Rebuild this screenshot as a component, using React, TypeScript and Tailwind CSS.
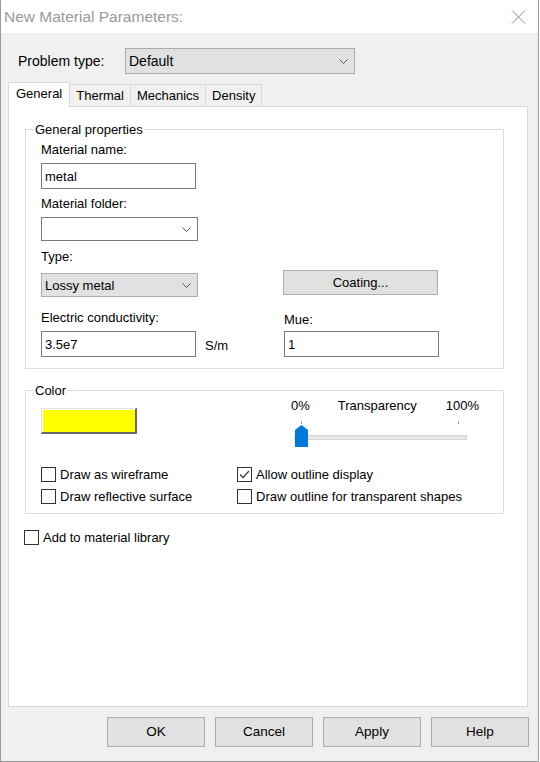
import React from "react";

function Chevron() {
  return (
    <svg width="9" height="5" viewBox="0 0 9 5" className="shrink-0">
      <path d="M0.5 0.5 L4.5 4.5 L8.5 0.5" fill="none" stroke="#555" strokeWidth="1" />
    </svg>
  );
}

function CloseX() {
  return (
    <svg width="15" height="14" viewBox="0 0 15 14">
      <path d="M1 0.5 L14 13.5 M14 0.5 L1 13.5" stroke="#8a8a8a" strokeWidth="1" />
    </svg>
  );
}

function Check({ label, checked }: { label: string; checked?: boolean }) {
  return (
    <label className="flex items-center gap-[4px] leading-[15px]">
      <span className="w-[15px] h-[15px] shrink-0 border border-[#333] bg-white flex items-center justify-center">
        {checked && (
          <svg width="13" height="13" viewBox="0 0 13 13">
            <path d="M2 6.5 L5 9.5 L11 3" fill="none" stroke="#444" strokeWidth="1.3" />
          </svg>
        )}
      </span>
      <span>{label}</span>
    </label>
  );
}

function TextBox({ value, w }: { value: string; w: string }) {
  return (
    <div className={`${w} h-[26px] border border-[#7a7a7a] bg-white flex items-center pl-[3px]`}>
      {value}
    </div>
  );
}

const TABS = ["Thermal", "Mechanics", "Density"];
const BUTTONS = ["OK", "Cancel", "Apply", "Help"];

export default function App() {
  return (
    <div className="w-[540px] h-[762px] bg-white">
      <div className="w-[539px] h-[762px] bg-[#f0f0f0] border-x border-b border-[#9a9a9a] flex flex-col text-[13px] text-black font-['Liberation_Sans',Arial,sans-serif]">
        {/* Title bar */}
        <div className="h-[33px] shrink-0 bg-white flex items-center justify-between pl-[3px] pr-[12px]">
          <span className="text-[15.5px] text-[#9a9a9a]">New Material Parameters:</span>
          <CloseX />
        </div>

        {/* Problem type */}
        <div className="mt-[15px] flex items-center pl-[17px]">
          <span className="w-[107px] text-[14px]">Problem type:</span>
          <div className="w-[230px] h-[26px] bg-[#e1e1e1] border border-[#adadad] flex items-center justify-between pl-[3px] pr-[6px] text-[14px]">
            <span>Default</span>
            <Chevron />
          </div>
        </div>

        {/* Tabs */}
        <div className="mt-[8px] ml-[7px] h-[24px] flex items-end">
          <div className="h-[25px] -mb-px relative z-10 bg-white border border-b-0 border-[#d9d9d9] px-[7px] pb-[2px] flex items-center">
            General
          </div>
          {TABS.map(t => (
            <div key={t} className="h-[22px] bg-[#f0f0f0] border-t border-r border-[#d9d9d9] px-[6px] flex items-center">
              {t}
            </div>
          ))}
        </div>

        {/* Tab panel */}
        <div className="ml-[7px] w-[520px] h-[601px] shrink-0 bg-white border border-[#d9d9d9] flex flex-col">
          <fieldset className="ml-[16px] mt-[15px] w-[479px] border border-[#dcdcdc]">
            <legend className="ml-[8px] px-[1px] leading-[15px]">General properties</legend>
            <div className="pl-[15px] pb-[11px] flex flex-col leading-[15px]">
              <span className="mt-[5px]">Material name:</span>
              <div className="mt-[6px]">
                <TextBox value="metal" w="w-[155px]" />
              </div>
              <span className="mt-[7px]">Material folder:</span>
              <div className="mt-[6px] w-[157px] h-[24px] border border-[#7a7a7a] bg-white flex items-center justify-end pr-[6px]">
                <Chevron />
              </div>
              <div className="flex items-end">
                <div className="w-[242px] flex flex-col">
                  <span className="mt-[8px]">Type:</span>
                  <div className="mt-[9px] w-[157px] h-[24px] bg-[#e1e1e1] border border-[#adadad] flex items-center justify-between pl-[3px] pr-[6px]">
                    <span>Lossy metal</span>
                    <Chevron />
                  </div>
                </div>
                <div className="mb-[2px] w-[155px] h-[25px] bg-[#e1e1e1] border border-[#adadad] flex items-center justify-center">
                  Coating...
                </div>
              </div>
              <div className="mt-[13px] flex">
                <div className="w-[243px] flex flex-col">
                  <span>Electric conductivity:</span>
                  <div className="mt-[6px] flex items-center">
                    <TextBox value="3.5e7" w="w-[155px]" />
                    <span className="ml-[9px] mt-[3px]">S/m</span>
                  </div>
                </div>
                <div className="flex flex-col">
                  <span className="mt-[2px]">Mue:</span>
                  <div className="mt-[4px]">
                    <TextBox value="1" w="w-[155px]" />
                  </div>
                </div>
              </div>
            </div>
          </fieldset>

          <fieldset className="ml-[16px] mt-[14px] w-[479px] border border-[#dcdcdc]">
            <legend className="ml-[8px] px-[1px] leading-[15px]">Color</legend>
            <div className="pl-[15px] pb-[9px] flex flex-col leading-[15px]">
              <div className="flex items-start">
                <div className="mt-[10px] w-[96px] h-[26px] border-t border-l border-t-[#e3e3e3] border-l-[#e3e3e3] border-r-2 border-b-2 border-r-[#696969] border-b-[#696969]">
                  <div className="w-full h-full bg-[#ffff00] border-t border-l border-white" />
                </div>
                <div className="ml-[153px] flex flex-col">
                  <div className="flex pl-[1px]">
                    <span>0%</span>
                    <span className="ml-[28px]">Transparency</span>
                    <span className="ml-[29px]">100%</span>
                  </div>
                  <svg width="180" height="27" viewBox="0 0 180 27" className="mt-[8px]">
                    <line x1="11.5" y1="0" x2="11.5" y2="3" stroke="#a0a0a0" />
                    <line x1="168.5" y1="0" x2="168.5" y2="3" stroke="#a0a0a0" />
                    <rect x="4.5" y="14.5" width="172" height="4" fill="#e7eaea" stroke="#d6d6d6" />
                    <path d="M5 9 L11.5 4 L18 9 L18 26 L5 26 Z" fill="#0078d7" />
                  </svg>
                </div>
              </div>
              <div className="mt-[19px] flex">
                <div className="w-[196px]"><Check label="Draw as wireframe" /></div>
                <Check label="Allow outline display" checked />
              </div>
              <div className="mt-[7px] flex">
                <div className="w-[196px]"><Check label="Draw reflective surface" /></div>
                <Check label="Draw outline for transparent shapes" />
              </div>
            </div>
          </fieldset>

          <div className="mt-[16px] ml-[15px]">
            <Check label="Add to material library" />
          </div>
        </div>

        {/* Dialog buttons */}
        <div className="mt-[10px] ml-[7px] w-[521px] flex justify-end gap-[10px]">
          {BUTTONS.map(b => (
            <div key={b} className="w-[98px] h-[30px] bg-[#e1e1e1] border border-[#adadad] flex items-center justify-center text-[13.5px]">
              {b}
            </div>
          ))}
        </div>
      </div>
    </div>
  );
}
